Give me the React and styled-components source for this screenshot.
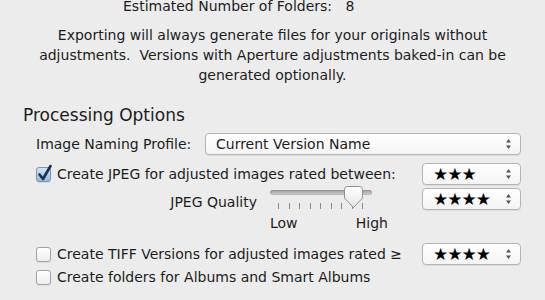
import React from 'react';
import styled, { createGlobalStyle } from 'styled-components';

const GlobalStyle = createGlobalStyle`
  html, body {
    margin: 0;
    padding: 0;
    background: #ececec;
  }
`;

const Pane = styled.div`
  width: 545px;
  height: 300px;
  overflow: hidden;
  background: #ececec;
  color: #1c1c1c;
  font-family: "DejaVu Sans", "Liberation Sans", sans-serif;
  font-size: 14px;
`;

const Summary = styled.div`
  margin-top: -4px;
  padding-left: 123px;
  line-height: 20px;
  white-space: pre;
`;

const Note = styled.p`
  margin: 9px 0 0;
  padding: 0 24px;
  text-align: center;
  line-height: 20px;
`;

const Heading = styled.h2`
  margin: 20px 0 0 23px;
  font-size: 17px;
  font-weight: normal;
  line-height: 20px;
`;

const Options = styled.div`
  display: flex;
  flex-direction: column;
  padding: 0 24px 0 36px;
`;

const Row = styled.div`
  display: flex;
  align-items: ${p => (p.$top ? 'flex-start' : 'center')};
  height: ${p => p.$height}px;
  margin-top: ${p => p.$gap}px;
`;

const Label = styled.span`
  white-space: pre;
  line-height: 16px;
`;

const QualityLabel = styled(Label)`
  width: 221px;
  margin-top: 8px;
  text-align: right;
`;

const PopUp = styled.div`
  display: flex;
  align-items: center;
  box-sizing: border-box;
  width: ${p => p.$width}px;
  height: 22px;
  margin-left: auto;
  margin-top: ${p => p.$offset || 0}px;
  padding: 0 8px 0 10px;
  border: 1px solid #b4b4b4;
  border-radius: 4px;
  background: linear-gradient(#ffffff, #f4f4f4);
  box-shadow: 0 1px 1px rgba(0, 0, 0, 0.07);
`;

const PopUpText = styled.span`
  flex: 1;
  white-space: pre;
`;

const Stars = styled.span`
  flex: 1;
  color: #000;
  font-size: 17px;
  letter-spacing: -1px;
  line-height: 20px;
`;

const Check = styled.label`
  display: flex;
  align-items: center;
  gap: 6px;
`;

const Box = styled.span`
  position: relative;
  box-sizing: border-box;
  width: 15px;
  height: 15px;
  border: 1px solid ${p => (p.$checked ? '#7f93ad' : '#a3a3a3')};
  border-radius: 3px;
  background: ${p =>
    p.$checked
      ? 'linear-gradient(#d3e3f6, #97b8e0)'
      : 'linear-gradient(#ffffff, #ededed)'};
  box-shadow: 0 1px 1px rgba(0, 0, 0, 0.08);
`;

const Tick = styled.svg`
  position: absolute;
  left: 0px;
  top: -4px;
`;

const Slider = styled.div`
  position: relative;
  width: 118px;
  height: 45px;
  margin-left: 13px;
`;

const Track = styled.div`
  width: 102px;
  height: 5px;
  margin-top: 4px;
  border-radius: 3px;
  background: linear-gradient(#9d9d9d, #cfcfcf);
  box-shadow: inset 0 0 0 1px rgba(0, 0, 0, 0.08);
`;

const Ticks = styled.div`
  display: flex;
  justify-content: space-between;
  width: 85px;
  margin: 8px 0 0 8px;
`;

const TickMark = styled.span`
  width: 1px;
  height: 6px;
  background: #8a8a8a;
`;

const Knob = styled.svg`
  position: absolute;
  left: 74px;
  top: 0;
`;

const Ends = styled.div`
  display: flex;
  justify-content: space-between;
  margin-top: 6px;
  line-height: 16px;
`;

const Arrows = () => (
  <svg width="7" height="12" viewBox="0 0 7 12">
    <path d="M3.5 1 L6 4.5 L1 4.5 Z" fill="#555" />
    <path d="M3.5 11 L6 7.5 L1 7.5 Z" fill="#555" />
  </svg>
);

const CheckBox = ({ checked, children }) => (
  <Check>
    <Box $checked={checked}>
      {checked && (
        <Tick width="16" height="18" viewBox="0 0 16 18">
          <path
            d="M2.5 10.5 L6 15 L13.5 2"
            fill="none"
            stroke="#1d2f52"
            strokeWidth="2.6"
            strokeLinecap="round"
            strokeLinejoin="round"
          />
        </Tick>
      )}
    </Box>
    <Label>{children}</Label>
  </Check>
);

const StarPopUp = ({ count, offset }) => (
  <PopUp $width={99} $offset={offset}>
    <Stars>{'★'.repeat(count)}</Stars>
    <Arrows />
  </PopUp>
);

const App = () => {
  return (
    <Pane>
      <GlobalStyle />
      <Summary>Estimated Number of Folders:   8</Summary>
      <Note>
        Exporting will always generate files for your originals without
        adjustments.&nbsp; Versions with Aperture adjustments baked-in can be
        generated optionally.
      </Note>

      <Heading>Processing Options</Heading>

      <Options>
        <Row $height={23} $gap={7}>
          <Label>Image Naming Profile:</Label>
          <PopUp $width={316}>
            <PopUpText>Current Version Name</PopUpText>
            <Arrows />
          </PopUp>
        </Row>

        <Row $height={22} $gap={8}>
          <CheckBox checked>Create JPEG for adjusted images rated between:</CheckBox>
          <StarPopUp count={3} />
        </Row>

        <Row $height={45} $gap={1} $top>
          <QualityLabel>JPEG Quality</QualityLabel>
          <Slider>
            <Track />
            <Ticks>
              {Array.from({ length: 9 }).map((_, i) => (
                <TickMark key={i} />
              ))}
            </Ticks>
            <Ends>
              <span>Low</span>
              <span>High</span>
            </Ends>
            <Knob width="19" height="23" viewBox="0 0 19 23">
              <defs>
                <linearGradient id="knobFill" x1="0" y1="0" x2="0" y2="1">
                  <stop offset="0" stopColor="#ffffff" />
                  <stop offset="1" stopColor="#e6e6e6" />
                </linearGradient>
              </defs>
              <path
                d="M3.5 0.5 H15.5 Q18.5 0.5 18.5 3.5 V12 L9.5 21.5 L0.5 12 V3.5 Q0.5 0.5 3.5 0.5 Z"
                fill="url(#knobFill)"
                stroke="#8e8e8e"
              />
            </Knob>
          </Slider>
          <StarPopUp count={4} offset={2} />
        </Row>

        <Row $height={22} $gap={12}>
          <CheckBox>Create TIFF Versions for adjusted images rated ≥</CheckBox>
          <StarPopUp count={4} />
        </Row>

        <Row $height={18} $gap={3}>
          <CheckBox>Create folders for Albums and Smart Albums</CheckBox>
        </Row>
      </Options>
    </Pane>
  );
};

export default App;
